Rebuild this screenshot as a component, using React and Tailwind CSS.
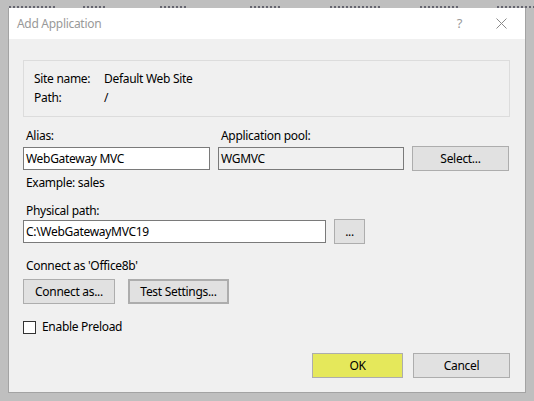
// App.jsx - IIS "Add Application" dialog
const font = { fontFamily: '"Noto Sans", "Open Sans", sans-serif', letterSpacing: '-0.3px' };

const Btn = ({ children, className = '' }) => (
  <button
    className={`h-[25px] bg-[#e1e1e1] border border-[#adadad] text-[12px] text-black flex items-center justify-center ${className}`}
  >
    {children}
  </button>
);

// scraps of the window behind the dialog
const scraps = [
  [9, 46], [83, 24], [160, 28], [250, 30], [330, 50], [420, 40], [497, 37],
];

export default function App() {
  return (
    <div className="w-[534px] h-[401px] bg-[#bfbfbf] overflow-hidden text-black" style={font}>
      {/* window behind, mostly covered */}
      <div className="h-[8px] relative">
        {scraps.map(([x, w]) => (
          <div
            key={x}
            className="absolute top-[6px] h-[2px] opacity-60 bg-[repeating-linear-gradient(90deg,#2a2a3a_0px,#2a2a3a_2px,transparent_2px,transparent_4px)]"
            style={{ left: x, width: w }}
          />
        ))}
      </div>

      {/* dialog */}
      <div className="ml-[8px] w-[518px] h-[385px] border border-[#a3a3a3] border-t-0 bg-[#f0f0f0] flex flex-col">
        {/* title bar */}
        <div className="h-[31px] bg-white flex items-center pl-[8px] pr-[18px]">
          <span className="text-[12px] text-[#999999] flex-1">Add Application</span>
          <span className="text-[13px] text-[#9a9a9a] mr-[34px]">?</span>
          <svg width="11" height="11" viewBox="0 0 11 11" className="mb-[1px]">
            <path d="M0.5 0.5 L10.5 10.5 M10.5 0.5 L0.5 10.5" stroke="#8a8a8a" strokeWidth="1" fill="none" />
          </svg>
        </div>

        <div className="flex flex-col pt-[21px] pl-[14px] pr-[15px] text-[12px]">
          {/* site info group */}
          <div className="h-[57px] border border-[#dcdcdc] pl-[10px] pt-[8px] leading-[19px]">
            <div className="flex">
              <span className="w-[70px]">Site name:</span>
              <span>Default Web Site</span>
            </div>
            <div className="flex">
              <span className="w-[70px]">Path:</span>
              <span>/</span>
            </div>
          </div>

          {/* alias / app pool */}
          <div className="flex items-start gap-[8px] mt-[11px]">
            <div className="w-[187px] flex flex-col">
              <span className="leading-[16px] pl-[3px]">Alias:</span>
              <div className="mt-[3px] h-[23px] bg-white border border-[#7a7a7a] pl-[2px] flex items-center">WebGateway MVC</div>
            </div>
            <div className="w-[186px] flex flex-col">
              <span className="leading-[16px] pl-[3px]">Application pool:</span>
              <div className="mt-[3px] h-[23px] bg-[#f0f0f0] border border-[#7a7a7a] pl-[2px] flex items-center">WGMVC</div>
            </div>
            <Btn className="w-[97px] mt-[18px]">Select...</Btn>
          </div>
          <span className="mt-[4px] leading-[16px] pl-[3px]">Example: sales</span>

          {/* physical path */}
          <span className="mt-[12px] leading-[16px] pl-[3px]">Physical path:</span>
          <div className="flex items-center gap-[8px]">
            <div className="w-[303px] h-[23px] bg-white border border-[#7a7a7a] pl-[2px] flex items-center">C:\WebGatewayMVC19</div>
            <Btn className="w-[31px]">...</Btn>
          </div>

          {/* connect as */}
          <span className="mt-[14px] leading-[16px] pl-[3px]">Connect as 'Office8b'</span>
          <div className="flex gap-[13px] mt-[5px]">
            <Btn className="w-[92px]">Connect as...</Btn>
            <Btn className="w-[101px] border-2 border-[#0078d7]">Test Settings...</Btn>
          </div>

          {/* preload */}
          <label className="flex items-center mt-[15px] h-[16px]">
            <span className="w-[13px] h-[13px] border border-[#333333] bg-white"></span>
            <span className="ml-[6px]">Enable Preload</span>
          </label>

          {/* footer buttons */}
          <div className="flex justify-end gap-[10px] mt-[18px]">
            <Btn className="w-[91px] bg-[#e5e85b] border-[#0078d7]">OK</Btn>
            <Btn className="w-[97px]">Cancel</Btn>
          </div>
        </div>
      </div>
    </div>
  );
}
